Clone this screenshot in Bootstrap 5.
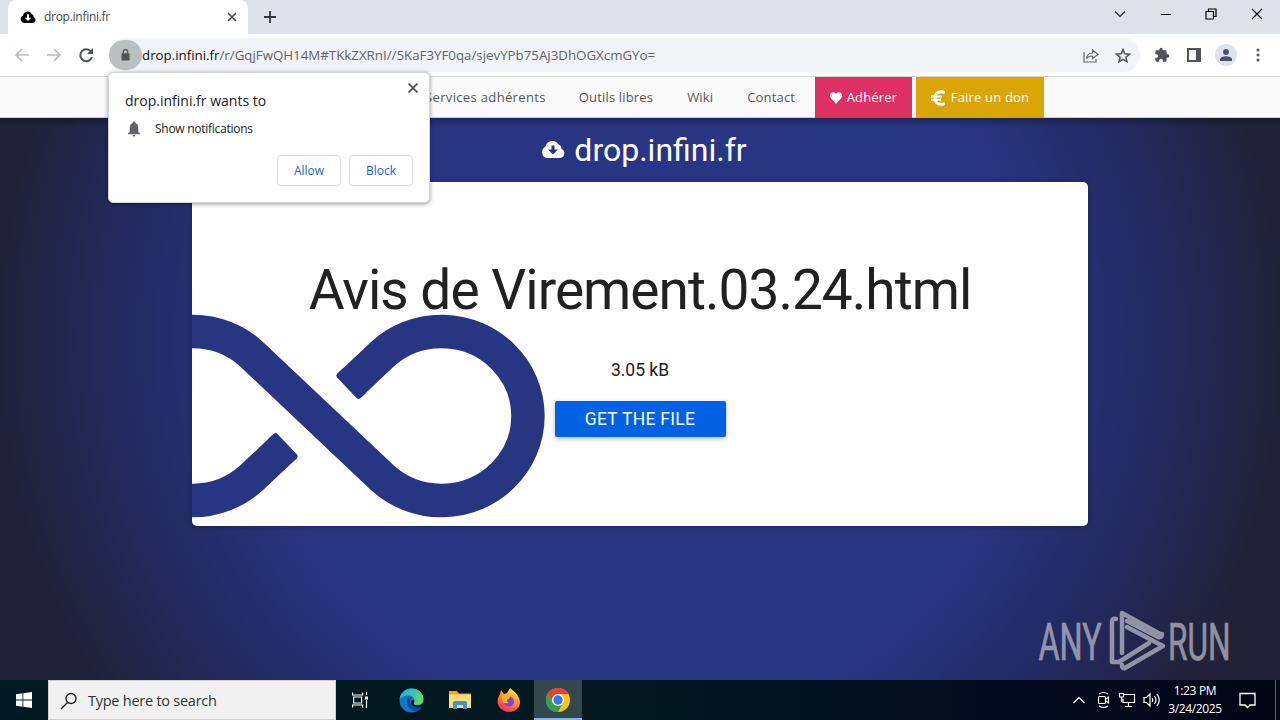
<!DOCTYPE html>
<html lang="en">
<head>
<meta charset="utf-8">
<title>drop.infini.fr</title>
<link href="https://cdn.jsdelivr.net/npm/bootstrap@5.3.0/dist/css/bootstrap.min.css" rel="stylesheet">
<style>
html,body{height:720px}
body{width:1280px;overflow:hidden;font-family:"Open Sans","Noto Sans",sans-serif;font-size:13px;color:#202124;background:#fff;line-height:1}
svg{display:block;flex:none}
.tabstrip{height:34px;background:#dee1e9}
.tab-active{width:240px;margin-left:8px;background:#fff;border-radius:8px 8px 0 0;font-size:12px;color:#45494d;padding:0 11px 0 12px}
.tab-active span{letter-spacing:-.28px}
.winctl{gap:34px;padding:0 17px 6px 0}
.toolbar{height:42px;background:#fff;padding:0 12px 0 13px}
.omni{width:1031px;height:34px;border-radius:17px;background:#f1f3f6;margin-left:14px;padding-right:9px}
.lockbtn{width:33px;height:30px;border-radius:16px;background:#bcbfbf}
.url{font-size:13.3px;color:#5f6368;white-space:nowrap;padding-top:1px}
.url b{font-weight:400;color:#111}
.avatar{width:22px;height:22px;border-radius:50%;background:#dfe1ec}
.sitenav{height:42px;background:#fafafa;border-top:1px solid #d5d5d5;border-bottom:1px solid #c8ccd8;padding-left:425px;color:#555;font-size:13px;letter-spacing:.17px;position:relative;z-index:1}
.sitenav span{white-space:nowrap}
.sitenav .first{letter-spacing:.35px}
.cta{height:41px;color:#fff}
.cta-join{background:#de3163;width:97px;position:absolute;left:815px;top:0}
.cta-give{background:#dba506;width:128px;position:absolute;left:916px;top:0}
.stage{height:562px;background:linear-gradient(#0004,#0000 9px),radial-gradient(circle at 640px 220px,#283583 380px,#232a60 520px,#21223a 640px,#212235 800px);font-family:Roboto,sans-serif}
.brand{height:64px;font-size:32px;color:#fff;padding-left:8px}
.filecard{width:896px;height:344px;border:0;border-radius:5px;overflow:hidden;color:#212121;box-shadow:0 1px 6px #0004}
.loop{position:absolute;left:0;top:124px}
.fname{font-size:55px;letter-spacing:-.97px;line-height:60px;margin-top:78px;white-space:nowrap;position:relative}
.fsize{font-size:17.5px;line-height:20px;margin-top:40px}
.getbtn{width:171px;height:36px;background:#0061e5;color:#fff;border-radius:2px;font-size:17.5px;letter-spacing:.28px;margin-top:21px;padding-top:2px;box-shadow:0 2px 5px #0004}
.wmark{position:absolute;left:1020px;top:602px}
.perm{position:absolute;left:108px;top:72px;width:322px;height:131px;background:#fff;border:1px solid #d3d5d8;border-radius:5px;box-shadow:0 1px 4px #0006;z-index:5;padding:16px 16px 15px}
.perm .ttl{font-size:14px;line-height:24px}
.perm .item{font-size:12px;gap:13px;margin-top:8px;padding-left:1px;letter-spacing:-.27px}
.perm .closex{position:absolute;right:11px;top:10px}
.pbtn{width:64px;height:31px;border:1px solid #dadce0;border-radius:4px;color:#1a66ca;font-size:12px}
.taskbar{height:40px;background:linear-gradient(90deg,#021a23,#021720 50%,#020a1d 80%,#020716)}
.search{width:288px;height:40px;background:#f1f1f1;border:1px solid #cfcfcf;color:#333;font-size:14.5px;padding:2px 0 0 11px;gap:10px;letter-spacing:-.25px}
.tk{width:48px;height:40px;margin-right:1px}
.tk-on{background:#34474f;border-bottom:2px solid #76b9ed}
.tray{color:#fff;font-size:12px}
.clock{width:56px;text-align:center;line-height:18px;white-space:nowrap;letter-spacing:-.35px}
</style>
</head>
<body class="d-flex flex-column">
<div class="tabstrip d-flex">
  <div class="tab-active d-flex align-items-center">
    <svg width="16" height="12" viewBox="0 0 24 18"><path fill="#000" d="M6 18a6 6 0 0 1-1.500-11.300A7 7 0 0 1 17.500 4.500A4.500 4.500 0 0 1 20.500 9A4.700 4.700 0 0 1 19 18z"/><path fill="#fff" d="M10.500 5h3v5H17l-5 5-5-5h3.500z"/></svg>
    <span class="ms-2">drop.infini.fr</span>
    <svg class="ms-auto" width="10" height="10" viewBox="0 0 10 10" stroke="#45494d" stroke-width="1.600"><path d="M1 1l8 8M9 1l-8 8"/></svg>
  </div>
  <svg class="align-self-center ms-3" width="12" height="12" viewBox="0 0 12 12" stroke="#33373c" stroke-width="1.800"><path d="M6 0v12M0 6h12"/></svg>
  <div class="winctl d-flex align-items-center ms-auto">
    <svg style="margin-right:1px" width="12" height="8" viewBox="0 0 12 8" fill="none" stroke="#222" stroke-width="1.100"><path d="M1 1.500l5 5 5-5"/></svg>
    <svg width="10" height="10" viewBox="0 0 10 10"><path d="M0 5h10v1H0z"/></svg>
    <svg width="12" height="12" viewBox="0 0 12 12" fill="none" stroke="#000" stroke-width="1.200"><path d="M1 3.500h7.500V11H1zM3.500 3.500V1H11v7.500H8.500"/></svg>
    <svg width="12" height="12" viewBox="0 0 12 12" stroke="#000" stroke-width="1.100"><path d="M1 1l10 10M11 1L1 11"/></svg>
  </div>
</div>
<div class="toolbar d-flex align-items-center">
  <svg width="82" height="16" viewBox="13 47 82 16" fill="none" stroke="#b9bbbe" stroke-width="1.700"><path d="M29 55H16M22 49l-6 6 6 6M47 55h13M54 49l6 6-6 6"/><path stroke="#505458" stroke-width="2" d="M91 51.500A6 6 0 1 0 92 57"/><path fill="#505458" stroke="none" d="M93 48v6h-6z"/></svg>
  <div class="omni d-flex align-items-center">
    <div class="lockbtn d-flex align-items-center justify-content-center"><svg width="9" height="12" viewBox="0 0 10 13"><rect x="0.500" y="4.500" width="9" height="8" rx="1" fill="#505458"/><path d="M2.500 5V3a2.500 2.500 0 0 1 5 0v2" fill="none" stroke="#505458" stroke-width="1.400"/></svg></div>
    <span class="url"><b>drop.infini.fr</b>/r/GqjFwQH14M#TKkZXRnI//5KaF3YF0qa/sjevYPb75Aj3DhOGXcmGYo=</span>
    <svg class="ms-auto" width="16" height="15" viewBox="0 0 16 15" fill="none" stroke="#5f6368" stroke-width="1.200"><path d="M1 4v10h12v-3M3.500 10.500C4 7 6 5 9.500 5V2L15 6.500l-5.500 4V8C7 8 5 8.500 3.500 10.500z"/></svg>
    <svg style="margin-left:16px" width="16" height="15" viewBox="0 0 16 15" fill="none" stroke="#505458" stroke-width="1.500"><path d="M8 1.500l1.800 4.300 4.700.4-3.600 3 1.100 4.600L8 11.400l-4 2.400 1.100-4.600-3.600-3 4.700-.4z"/></svg>
  </div>
  <svg style="margin-left:14px" width="16" height="16" viewBox="0 0 24 24" fill="#505458"><path d="M20.500 11H19V7a2 2 0 0 0-2-2h-4V3.500a2.500 2.500 0 0 0-5 0V5H4a2 2 0 0 0-2 2v3.800h1.500a2.700 2.700 0 0 1 0 5.400H2V20a2 2 0 0 0 2 2h3.800v-1.500a2.700 2.700 0 0 1 5.400 0V22H17a2 2 0 0 0 2-2v-4h1.500a2.500 2.500 0 0 0 0-5z"/></svg>
  <svg style="margin-left:17px" width="14" height="14" viewBox="0 0 14 14"><path fill="#505458" d="M0 0h14v14H0z"/><path fill="#fff" d="M2 2h7v10H2z"/></svg>
  <div class="avatar d-flex align-items-center justify-content-center ms-auto"><svg width="12" height="12" viewBox="0 0 12 12" fill="#4c5168"><circle cx="6" cy="3" r="2.900"/><path d="M0 12V10.500C0 8 4 7.300 6 7.300s6 .7 6 3.200V12z"/></svg></div>
  <svg style="margin-left:19px;margin-right:8px" width="4" height="14" viewBox="0 0 4 14" fill="#505458"><circle cx="2" cy="2" r="1.500"/><circle cx="2" cy="7" r="1.500"/><circle cx="2" cy="12" r="1.500"/></svg>
</div>
<div class="sitenav d-flex align-items-center flex-shrink-0">
  <span class="first">Services adhérents</span><span style="margin-left:33px">Outils libres</span><span style="margin-left:34px">Wiki</span><span style="margin-left:34px">Contact</span>
  <div class="cta cta-join d-flex align-items-center justify-content-center"><svg width="12" height="12" viewBox="0 0 12 12"><path fill="#fff" d="M6 12L1 6.200C-1.500 3 1-0.500 3.500.3 5 .6 5.700 1.500 6 2.300 6.300 1.500 7 .6 8.500.3 11-.5 13.500 3 11 6.200z"/></svg><span style="margin-left:5px">Adhérer</span></div>
  <div class="cta cta-give d-flex align-items-center justify-content-center"><svg width="14" height="16" viewBox="0 0 14 16" fill="none" stroke="#fff" stroke-width="3"><path d="M14 2.700C8 .2 4 3 4 8s4 8 10 5.300"/><path stroke-width="2" d="M0 6.500h11M0 9.700h10"/></svg><span style="margin-left:6px">Faire un don</span></div>
</div>
<main class="stage d-flex flex-column align-items-center flex-shrink-0">
  <div class="brand d-flex align-items-center"><svg width="24" height="18" style="margin-bottom:3px" viewBox="0 0 24 18"><path fill="#fff" d="M6 18a6 6 0 0 1-1.500-11.300A7 7 0 0 1 17.500 4.500 4.500 4.500 0 0 1 20.500 9 4.700 4.700 0 0 1 19 18z"/><path fill="#283583" d="M10.500 5.500h3v4H17L12 14.500 7 9.500h3.500z"/></svg><span style="margin-left:9px">drop.infini.fr</span></div>
  <div class="card filecard align-items-center">
    <svg class="loop" width="360" height="220" viewBox="192 306 360 220"><path fill="none" stroke="#283583" stroke-width="33.500" d="M349 385.700L382 354.600A86.500 84.500 0 1 1 382 477.400L252 354.600A86.500 84.500 0 1 0 252 477.400L285 446.300"/><path fill="#283583" stroke="#283583" stroke-width="5" stroke-linejoin="round" d="M358.400 396.400L338.800 375.700 344.300 370.600 363.900 391.300zM275.600 435.600L295.200 456.300 289.700 461.400 270.100 440.700z"/></svg>
    <div class="fname">Avis de Virement.03.24.html</div>
    <div class="fsize">3.05 kB</div>
    <div class="getbtn d-flex align-items-center justify-content-center"><span>GET THE FILE</span></div>
  </div>
</main>
<svg class="wmark" width="250" height="76" viewBox="1020 602 250 76" fill="#fff" opacity=".5" font-family="Roboto,sans-serif" font-size="51"><text transform="translate(1038.500 659.500) scale(.635 1)" stroke="#fff" stroke-width=".6">ANY</text><text transform="translate(1168 659.500) scale(.62 1)" stroke="#fff" stroke-width=".6">RUN</text><path fill="none" stroke="#fff" stroke-width="4.500" stroke-linejoin="round" stroke-linecap="round" d="M1116 619q-4-1-4 3v40l7 0L1149 643M1122 653V613l40 22M1127 627l36 19-38 22q-3 1-3-3M1162 634q0 4-4 3L1127 621"/></svg>
<div class="perm">
  <svg class="closex" width="10" height="10" viewBox="0 0 10 10" stroke="#505458" stroke-width="1.800"><path d="M.5.500l9 9M9.500.500l-9 9"/></svg>
  <div class="ttl">drop.infini.fr wants to</div>
  <div class="item d-flex align-items-center"><svg width="16" height="16" viewBox="0 0 16 16" fill="#606368"><path d="M8 .5c1 0 1.300.7 1.300 1.400 2 .6 3 2.300 3 4.400V11l1.700 1.500v.8H2v-.8L3.700 11V6.300c0-2.100 1-3.800 3-4.400C6.700 1.200 7 .5 8 .5zM6.500 14h3q-.3 1.500-1.500 1.500T6.500 14z"/></svg><span>Show notifications</span></div>
  <div class="d-flex justify-content-end gap-2" style="margin-top:18px"><div class="pbtn d-flex align-items-center justify-content-center">Allow</div><div class="pbtn d-flex align-items-center justify-content-center">Block</div></div>
</div>
<footer class="taskbar d-flex align-items-center flex-shrink-0">
  <div class="tk me-0 d-flex align-items-center justify-content-center"><svg width="16" height="16" viewBox="0 0 16 16" fill="#fff"><path d="M0 2.300L6.500 1.300V7.600H0zM7.300 1.200L16 0V7.600H7.300zM0 8.400h6.500v6.300L0 13.700zM7.300 8.400H16V16l-8.700-1.200z"/></svg></div>
  <div class="search d-flex align-items-center"><svg width="18" height="18" viewBox="0 0 18 18" fill="none" stroke="#222" stroke-width="1.400"><circle cx="11" cy="6.500" r="5"/><path d="M7.500 10.500L1 17"/></svg><span>Type here to search</span></div>
  <div class="tk d-flex align-items-center justify-content-center"><svg width="17" height="16" viewBox="0 0 17 16" fill="none" stroke="#fff" stroke-width="1.200"><path d="M.6.500V3h10V.5M.6 15.500V13h10v2.500M1.600 5h8v6h-8zM14.500 0v3M14.500 8v8"/><path d="M13 4.500h3v3h-3z" fill="#fff" stroke="none"/></svg></div>
  <div class="tk d-flex align-items-center justify-content-center" style="margin-left:2px"><svg width="25" height="25" viewBox="0 0 25 25"><defs><linearGradient id="e1" x1="0" y1="0" x2="1" y2=".4"><stop stop-color="#27a9e8"/><stop offset=".6" stop-color="#36c6b0"/><stop offset="1" stop-color="#65d95a"/></linearGradient></defs><circle cx="12.500" cy="12.500" r="12" fill="#1576c9"/><path fill="url(#e1)" d="M.5 11C2 3 8 .5 12.500.5c7 0 12 5 12 10.500 0 4-3 6-6.500 6-3 0-4-1-3-2.500 1-2 .5-6-4-7-4-.7-8 1-10.500 3.500z"/><path fill="#0d4b99" d="M9 9.500c-3 6 1 13 8 14 3-.8 5-3 6-5-4 2.500-12 1-12-5 0-2 1-3 2-4z"/><path fill="#021a23" d="M14 11.500c2 1 1.500 2.500 1 3.300-.8 1.700.5 2.700 3 2.700 2.500 0 5-1 6-2.500l1 3.500-2 .5c-4 1.500-11 0-11-4.500 0-1.500 1-3 3-3z"/></svg></div>
  <div class="tk d-flex align-items-center justify-content-center"><svg width="22" height="19" viewBox="0 0 22 19"><path fill="#e8a81c" d="M0 0h8l2 2.500h12V6H0z"/><path fill="#fddc7c" d="M0 3.500h22V17H0z"/><path fill="#3d93d6" d="M4 18v-6q0-2 2-2h10q2 0 2 2v6h-4v-4H8v4z"/><path fill="#fddc7c" d="M8 14h6v3H8z"/></svg></div>
  <div class="tk d-flex align-items-center justify-content-center"><svg width="24" height="25" viewBox="0 0 24 25"><defs><linearGradient id="f1" x1=".8" y1="0" x2=".3" y2="1"><stop stop-color="#fff04a"/><stop offset=".45" stop-color="#ff9a22"/><stop offset="1" stop-color="#f5225d"/></linearGradient></defs><path fill="url(#f1)" d="M3 6L4 2l3 4 3-1 3-5c2 2 6 4 8 8 5 8 0 16-9 16C3 24-3 15 3 6z"/><circle cx="12" cy="13.500" r="5" fill="#8142d6"/><path fill="#ffb02d" d="M5 8c3-1.500 6-1 8 .5L12 11c-3 0-3 3 0 3.500-3 2-7 0-7-3z"/></svg></div>
  <div class="tk tk-on d-flex align-items-center justify-content-center"><svg width="24" height="24" style="margin-top:2px" viewBox="0 0 24 24"><circle cx="12" cy="12" r="12" fill="#fbc318"/><path fill="#df4335" d="M1.600 6A12 12 0 0 1 22.400 6H12L7 15z"/><path fill="#2fa24c" d="M1.600 6A12 12 0 0 0 12 24l5.200-9H6.800z"/><circle cx="12" cy="12" r="6" fill="#fff"/><circle cx="12" cy="12" r="4.700" fill="#2f7de9"/></svg></div>
  <div class="tray d-flex align-items-center ms-auto">
    <svg width="90" height="20" viewBox="1072 690 90 20" fill="none" stroke="#fff" stroke-width="1.200"><path d="M1073.500 703l5.500-5.500 5.500 5.500M1099 694q4.500-3 9 0M1099 706q4.500 3 9 0"/><rect x="1098.500" y="696.500" width="7" height="7" rx="1"/><path d="M1106 699l2.500-2v6l-2.500-2M1124 694.500h10.500v8H1123v-4M1128.500 703v3.500M1125 706.500h7M1119.500 693.500h4v3.500h-4zM1121.500 697v5M1144 697.500h2.500l3.500-3.500v12l-3.500-3.500H1144zM1152 698q1.500 2 0 4M1154.500 696q3 4 0 8M1157 694q4.500 6 0 12"/></svg>
    <div class="clock" style="margin-left:5px"><div>1:23 PM</div><div>3/24/2025</div></div>
    <svg style="margin-left:16px;margin-right:19px" width="17" height="17" viewBox="0 0 17 17" fill="none" stroke="#fff" stroke-width="1.300"><path d="M1 1.500h15v11.500h-5L8.500 15.500 6 13H1z"/></svg>
    <div style="width:1px;height:40px;background:#59616e;margin-right:4px"></div>
  </div>
</footer>
<script src="https://cdn.jsdelivr.net/npm/bootstrap@5.3.0/dist/js/bootstrap.bundle.min.js"></script>
</body>
</html>
